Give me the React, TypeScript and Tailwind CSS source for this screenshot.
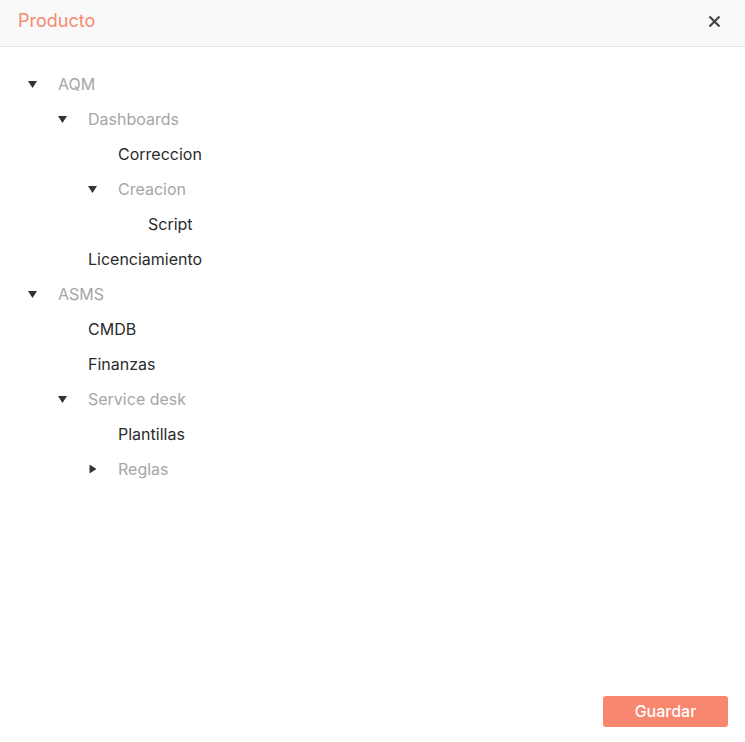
import { useState } from 'react';

type Node = { label: string; children?: Node[]; open?: boolean };

const tree: Node[] = [
  {
    label: 'AQM',
    open: true,
    children: [
      {
        label: 'Dashboards',
        open: true,
        children: [
          { label: 'Correccion' },
          { label: 'Creacion', open: true, children: [{ label: 'Script' }] },
        ],
      },
      { label: 'Licenciamiento' },
    ],
  },
  {
    label: 'ASMS',
    open: true,
    children: [
      { label: 'CMDB' },
      { label: 'Finanzas' },
      {
        label: 'Service desk',
        open: true,
        children: [
          { label: 'Plantillas' },
          { label: 'Reglas', open: false, children: [{ label: 'Alertas' }] },
        ],
      },
    ],
  },
];

const padByLevel = ['pl-[28px]', 'pl-[58px]', 'pl-[88px]', 'pl-[118px]'];

function TreeItem({ node, level }: { node: Node; level: number }) {
  const [open, setOpen] = useState(!!node.open);
  const hasKids = !!node.children?.length;

  return (
    <div>
      <div
        className={`flex items-center h-[35px] cursor-pointer ${padByLevel[level]}`}
        onClick={() => hasKids && setOpen(!open)}
      >
        <span className="w-[30px] flex items-center">
          {hasKids && (
            <svg width="9" height="8" viewBox="0 0 9 8" className={open ? '' : '-rotate-90'}>
              <path d="M0 1 L9 1 L4.5 8 Z" fill="#333" />
            </svg>
          )}
        </span>
        <span className={`text-[16px] ${hasKids ? 'text-[#a6a6a6]' : 'text-[#2b2b2b]'}`}>{node.label}</span>
      </div>
      {hasKids && open && node.children!.map((c) => <TreeItem key={c.label} node={c} level={level + 1} />)}
    </div>
  );
}

export default function App() {
  return (
    <div className="w-[745px] h-[742px] bg-white flex flex-col" style={{ fontFamily: 'Inter, "Noto Sans", sans-serif' }}>
      <div className="h-[47px] shrink-0 bg-[#f9f9f9] border-b border-[#e3e3e3] flex items-center justify-between pl-[18px] pr-[24px] pb-[5px]">
        <h2 className="text-[18px] text-[#f58a70] leading-none">Producto</h2>
        <button className="text-[#444] pt-[2px]">
          <svg width="13" height="13" viewBox="0 0 13 13">
            <path d="M1.5 1.5 L11.5 11.5 M11.5 1.5 L1.5 11.5" stroke="#444" strokeWidth="2.2" />
          </svg>
        </button>
      </div>

      <div className="flex-1 pt-[19px]">
        {tree.map((n) => (
          <TreeItem key={n.label} node={n} level={0} />
        ))}
      </div>

      <div className="flex justify-end pr-[17px] pb-[15px]">
        <button className="w-[125px] h-[31px] rounded-[3px] bg-[#f7876f] text-white text-[16px] font-medium pb-[2px]">
          Guardar
        </button>
      </div>
    </div>
  );
}
